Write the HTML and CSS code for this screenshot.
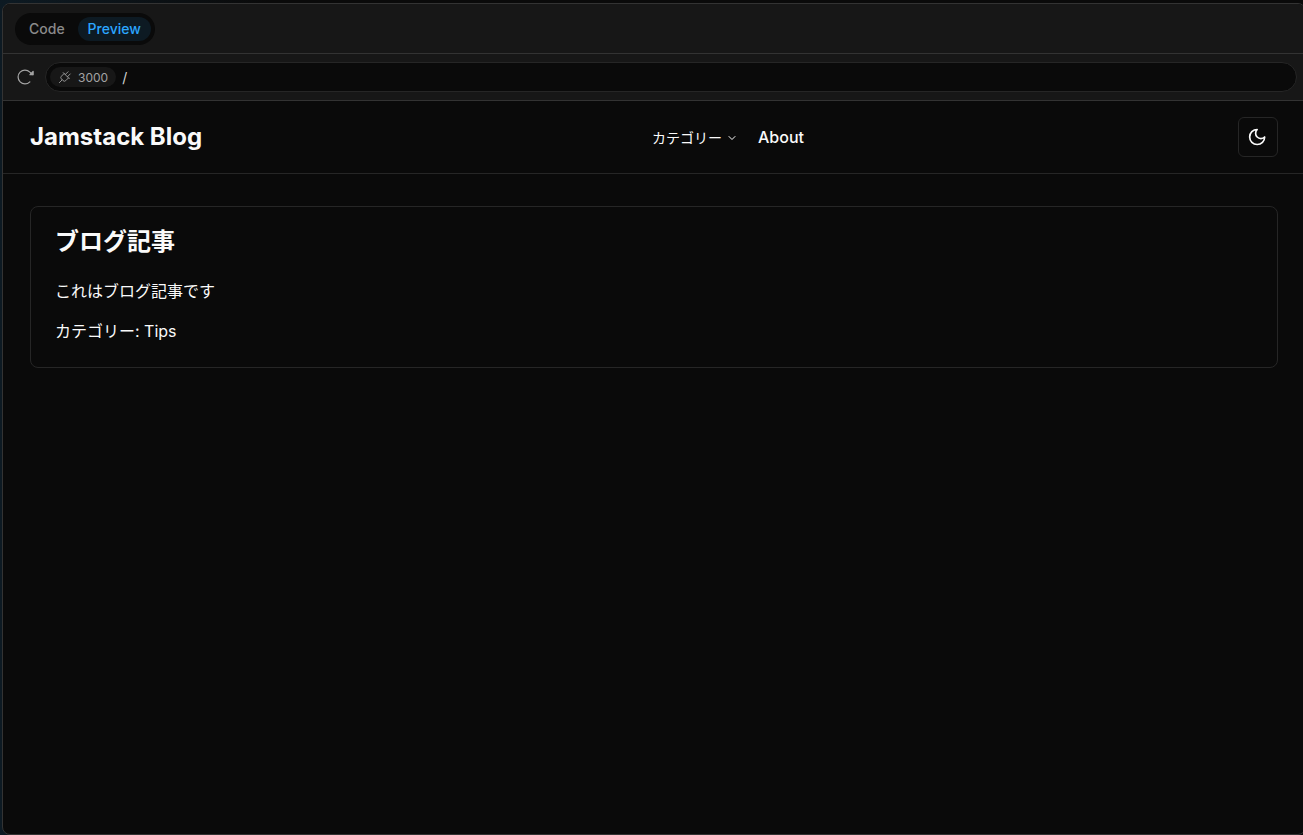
FILE: index.html
```html
<!DOCTYPE html>
<html lang="ja">
<head>
<meta charset="utf-8">
<title>Jamstack Blog</title>
<link rel="stylesheet" href="styles.css">
</head>
<body>
<div class="frame">
  <div class="toolbar">
    <div class="tabs">
      <button class="tab" type="button">Code</button>
      <button class="tab tab-active" type="button">Preview</button>
    </div>
  </div>
  <div class="address-row">
    <button class="reload" type="button" aria-label="Reload">
      <svg width="20" height="20" viewBox="0 0 256 256" fill="none" stroke="currentColor" stroke-width="16" stroke-linecap="round" stroke-linejoin="round"><path d="M192 99h40V56z" fill="currentColor"/><path d="M190 190a88 88 0 1 1 0-124l30 30"/></svg>
    </button>
    <div class="address">
      <button class="port" type="button">
        <svg width="14" height="14" viewBox="0 0 256 256" fill="none" stroke="currentColor" stroke-width="16" stroke-linecap="round" stroke-linejoin="round"><path d="M96 48l112 112M192 144l-50 50a36 36 0 0 1-50 0l-30-30a36 36 0 0 1 0-50l50-50M76 180l-52 52M132 84l52-52M172 124l52-52"/></svg>
        <span>3000</span>
      </button>
      <input class="path" type="text" value="/" aria-label="Path">
    </div>
  </div>
  <header class="site-header">
    <a class="brand" href="#">Jamstack Blog</a>
    <nav class="nav">
      <button class="nav-menu" type="button">カテゴリー
        <svg width="12" height="12" viewBox="0 0 24 24" fill="none" stroke="currentColor" stroke-width="2" stroke-linecap="round" stroke-linejoin="round"><path d="m6 11 6 6 6-6"/></svg>
      </button>
      <a class="nav-link" href="#">About</a>
    </nav>
    <div class="actions">
      <button class="theme" type="button" aria-label="Toggle theme">
        <svg width="20" height="20" viewBox="0 0 24 24" fill="none" stroke="currentColor" stroke-width="2" stroke-linecap="round" stroke-linejoin="round"><path d="M11 3a6 6 0 0 0 9 9 9 9 0 1 1-9-9Z"/></svg>
      </button>
    </div>
  </header>
  <main class="content">
    <article class="card">
      <h2 class="card-title">ブログ記事</h2>
      <p class="card-text">これはブログ記事です</p>
      <p class="card-text">カテゴリー: Tips</p>
    </article>
  </main>
</div>
</body>
</html>
```
FILE: styles.css
```css
* { box-sizing: border-box; }

body {
  margin: 0;
  height: 100vh;
  padding-top: 3px;
  overflow: hidden;
  background: linear-gradient(to right, #0d1a23 0, #0a0a0a 270px);
  color: #fafafa;
  font-family: Inter, "Noto Sans CJK JP", sans-serif;
}

button, input {
  font: inherit;
  color: inherit;
  border: 0;
  margin: 0;
  padding: 0;
  background: none;
}

a { color: inherit; text-decoration: none; }
svg { display: block; flex: none; }

.frame {
  display: flex;
  flex-direction: column;
  height: 100%;
  margin: 0 -3px 0 2px;
  border: 1px solid #333;
  border-radius: 8px;
  background: #0a0a0a;
  overflow: hidden;
}

.toolbar {
  display: flex;
  align-items: center;
  height: 50px;
  padding: 0 12px;
  background: #171717;
  border-bottom: 1px solid #333;
}

.tabs {
  display: flex;
  gap: 3px;
  padding: 4px;
  border-radius: 16px;
  background: #0a0a0a;
}

.tab {
  height: 24px;
  padding: 0 10px;
  border-radius: 12px;
  font-size: 14px;
  font-weight: 500;
  line-height: 24px;
  color: #8a8a8a;
}

.tab-active { background: #0d1a23; color: #2ba6ff; }

.address-row {
  display: flex;
  align-items: center;
  gap: 10px;
  height: 47px;
  padding: 0 8px 0 12px;
  background: #171717;
  border-bottom: 1px solid #333;
  color: #a3a3a3;
}

.address {
  display: flex;
  flex: 1;
  align-items: center;
  gap: 6px;
  height: 30px;
  padding: 0 4px;
  border: 1px solid #262626;
  border-radius: 15px;
  background: #0a0a0a;
  font-size: 12px;
}

.port {
  display: flex;
  align-items: center;
  gap: 6px;
  height: 20px;
  padding: 0 8px;
  border-radius: 10px;
  background: #171717;
}

.path { flex: 1; min-width: 0; height: 20px; outline: 0; font-size: 14px; color: #d4d4d4; }

.site-header {
  display: grid;
  grid-template-columns: 1fr auto 1fr;
  align-items: center;
  height: 73px;
  padding: 0 27px;
  border-bottom: 1px solid #262626;
}

.brand { font-size: 24px; font-weight: 700; line-height: 32px; }

.nav { display: flex; align-items: center; padding-left: 148px; gap: 20px; }

.nav-menu {
  display: flex;
  align-items: center;
  gap: 4px;
  font-size: 14px;
}

.nav-link { font-size: 16px; font-weight: 500; line-height: 24px; }

.actions { display: flex; justify-content: flex-end; }

.theme {
  display: flex;
  align-items: center;
  justify-content: center;
  width: 40px;
  height: 40px;
  border: 1px solid #262626;
  border-radius: 6px;
}

.content { flex: 1; padding: 32px 27px; }

.card {
  padding: 16px 24px 24px;
  border: 1px solid #262626;
  border-radius: 8px;
}

.card-title { margin: 0 0 18px; font-size: 24px; font-weight: 700; line-height: 38px; }
.card-text { margin: 0; font-size: 16px; line-height: 24px; }
.card-text + .card-text { margin-top: 16px; }
```
